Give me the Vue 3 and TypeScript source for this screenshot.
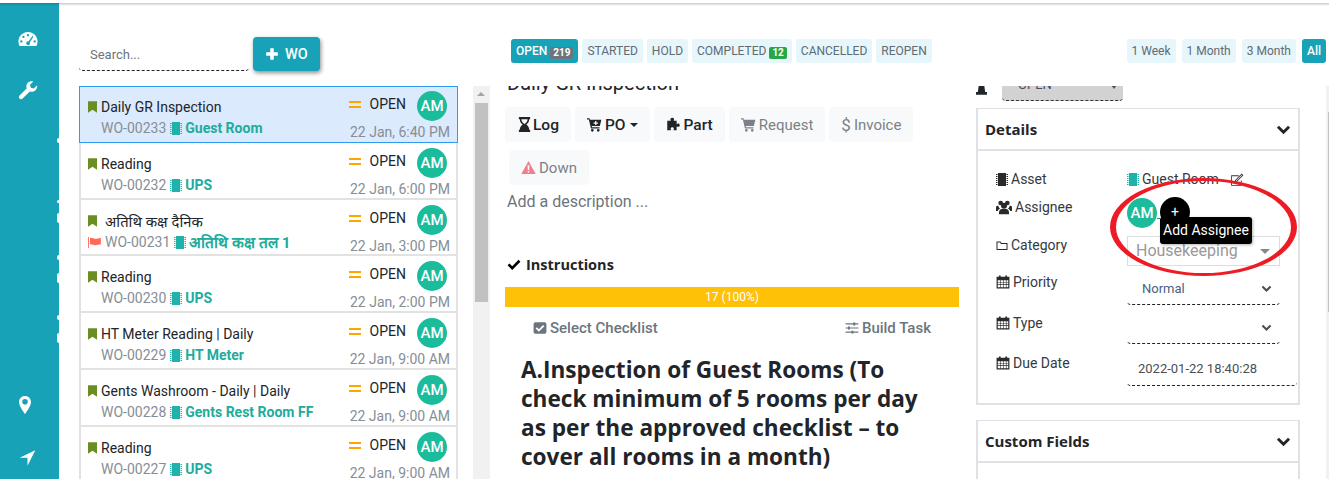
<template>
  <div class="page">
    <div class="topline"></div>
    <div class="body">
      <aside class="sidebar">
        <div class="side-top">
          <svg class="side-ic" viewBox="0 0 24 24"><path fill-rule="evenodd" :d="icons.gauge" /></svg>
          <svg class="side-ic" viewBox="0 0 24 24"><path :d="icons.wrench" /></svg>
        </div>
        <div class="side-bottom">
          <svg class="side-ic pin" viewBox="0 0 24 24"><path fill-rule="evenodd" :d="icons.marker" /></svg>
          <svg class="side-ic nav" viewBox="0 0 24 24"><path :d="icons.arrow" /></svg>
        </div>
        <i
          v-for="n in notches"
          :key="n.top"
          class="notch"
          :style="{ top: n.top + 'px', height: n.height + 'px' }"
        ></i>
      </aside>

      <main class="content">
        <div class="toolbar">
          <input class="search" placeholder="Search..." />
          <button class="add-btn">
            <svg class="ic" viewBox="0 0 24 24"><path :d="icons.plus" /></svg>
            WO
          </button>
          <div class="tabs">
            <span v-for="t in tabs" :key="t.label" class="tab" :class="{ active: t.active }">
              {{ t.label }}
              <b v-if="t.badge" class="badge" :class="t.badgeClass">{{ t.badge }}</b>
            </span>
          </div>
          <div class="ranges">
            <span v-for="r in ranges" :key="r" class="tab" :class="{ active: r === 'All' }">{{ r }}</span>
          </div>
        </div>

        <div class="panels">
          <section class="list">
            <article
              v-for="(wo, i) in orders"
              :key="wo.code"
              class="card"
              :class="{ selected: i === 0, short: wo.hindi }"
            >
              <div class="card-left">
                <div class="card-title">
                  <svg class="bookmark" viewBox="0 0 10 13"><path d="M0 0h10v13L5 9.500 0 13z" /></svg>
                  <span :class="{ hindi: wo.hindi }">{{ wo.title }}</span>
                </div>
                <div class="card-sub">
                  <svg v-if="wo.flag" class="flag" viewBox="0 0 14 12"><path d="M0 0h1v12H0zM2 1c3-1 4 1 6 1 2 0 3-1 6-1v7c-3 0-4 1-6 1-2 0-3-1-6-1z" /></svg>
                  <span class="code">{{ wo.code }}</span>
                  <svg class="chip" viewBox="0 0 12 13"><path :d="icons.chip" /></svg>
                  <strong class="asset" :class="{ 'asset-hi': wo.hindi }">{{ wo.asset }}</strong>
                </div>
              </div>
              <div class="card-right">
                <div class="status-row">
                  <i class="equals"></i>
                  <span class="status">OPEN</span>
                  <span class="avatar">AM</span>
                </div>
                <div class="date">{{ wo.date }}</div>
              </div>
            </article>
          </section>

          <div class="scrollbar">
            <i class="scroll-up"></i>
            <div class="thumb"></div>
          </div>

          <section class="detail">
            <h2 class="wo-title">Daily GR Inspection</h2>
            <div class="actions">
              <button class="act strong log">
                <svg class="ic" viewBox="0 0 24 24"><path fill-rule="evenodd" :d="icons.hourglass" /></svg>Log
              </button>
              <button class="act strong">
                <svg class="ic" viewBox="0 0 24 24"><path fill-rule="evenodd" :d="icons.cartPlus" /></svg>PO<i class="caret"></i>
              </button>
              <button class="act strong">
                <svg class="ic" viewBox="0 0 24 24"><path :d="icons.puzzle" /></svg>Part
              </button>
              <button class="act">
                <svg class="ic" viewBox="0 0 24 24"><path :d="icons.cart" /></svg>Request
              </button>
              <button class="act">
                <span class="dollar">$</span>Invoice
              </button>
              <button class="act down">
                <svg class="ic warn" viewBox="0 0 24 24"><path fill-rule="evenodd" :d="icons.warning" /></svg>Down
              </button>
            </div>
            <p class="desc">Add a description ...</p>
            <h3 class="instr">
              <svg class="ic" viewBox="0 0 24 24"><path :d="icons.check" /></svg>Instructions
            </h3>
            <div class="progress">17 (100%)</div>
            <div class="check-actions">
              <span class="check-link">
                <svg class="ic" viewBox="0 0 24 24"><path fill-rule="evenodd" :d="icons.checkbox" /></svg>Select Checklist
              </span>
              <span class="check-link">
                <svg class="ic" viewBox="0 0 24 24"><path :d="icons.sliders" /></svg>Build Task
              </span>
            </div>
            <h1 class="task-head">A.Inspection of Guest Rooms (To check minimum of 5 rooms per day as per the approved checklist – to cover all rooms in a month)</h1>
          </section>

          <section class="side-panel">
            <div class="status-line">
              <svg class="male" viewBox="0 7 12 9"><path d="M3 0h6v6l1 7h2v3H0v-3h2l1-7z" /></svg>
              <div class="status-select">
                <span>OPEN</span>
                <i class="mini-caret"></i>
              </div>
            </div>

            <div class="box">
              <div class="box-head">
                <span>Details</span>
                <svg class="chev" viewBox="0 0 24 24"><path :d="icons.chevron" /></svg>
              </div>
              <div class="box-body">
                <div class="row r-asset">
                  <label><svg class="lab-ic" viewBox="0 0 12 13"><path :d="icons.chip" /></svg>Asset</label>
                  <div class="val-asset">
                    <svg class="chip" viewBox="0 0 12 13"><path :d="icons.chip" /></svg>
                    <span>Guest Room</span>
                    <svg class="edit" viewBox="0 0 24 24"><path fill-rule="evenodd" :d="icons.edit" /></svg>
                  </div>
                </div>
                <div class="row r-assignee">
                  <label><svg class="lab-ic users" viewBox="0 0 24 24"><path :d="icons.users" /></svg>Assignee</label>
                  <span class="avatar">AM</span>
                  <i class="link-line"></i>
                </div>
                <div class="row r-category">
                  <label><svg class="lab-ic" viewBox="0 0 24 24"><path fill-rule="evenodd" :d="icons.folder" /></svg>Category</label>
                  <div class="house">Housekeeping<i class="mini-caret"></i></div>
                </div>
                <div class="row r-priority">
                  <label><svg class="lab-ic cal" viewBox="0 0 24 24"><path fill-rule="evenodd" :d="icons.calendar" /></svg>Priority</label>
                  <div class="dash-select">
                    <span>Normal</span>
                    <svg class="sel-chev" viewBox="0 0 24 24"><path :d="icons.chevron" /></svg>
                  </div>
                </div>
                <div class="row r-type">
                  <label><svg class="lab-ic cal" viewBox="0 0 24 24"><path fill-rule="evenodd" :d="icons.calendar" /></svg>Type</label>
                  <div class="dash-select">
                    <span></span>
                    <svg class="sel-chev" viewBox="0 0 24 24"><path :d="icons.chevron" /></svg>
                  </div>
                </div>
                <div class="row r-due">
                  <label><svg class="lab-ic cal" viewBox="0 0 24 24"><path fill-rule="evenodd" :d="icons.calendar" /></svg>Due Date</label>
                  <div class="dash-select due">2022-01-22 18:40:28</div>
                </div>
              </div>
            </div>

            <div class="box custom">
              <div class="box-head">
                <span>Custom Fields</span>
                <svg class="chev" viewBox="0 0 24 24"><path :d="icons.chevron" /></svg>
              </div>
            </div>
          </section>
          <div class="outer-scroll"><div class="outer-thumb"></div></div>
        </div>
      </main>
    </div>

    <!-- annotation drawn on top of the screenshot -->
    <div class="add-circle">+</div>
    <div class="add-tip">Add Assignee</div>
    <svg class="annotation" viewBox="0 0 190 102">
      <path
        fill="#ed1c24"
        fill-rule="evenodd"
        d="M1 51a93.500 49 0 1 0 187 0a93.500 49 0 1 0-187 0zM7 51a87.500 46 0 1 0 175 0a87.500 46 0 1 0-175 0z"
      />
    </svg>
  </div>
</template>

<script setup lang="ts">
interface Order {
  title: string
  code: string
  asset: string
  date: string
  hindi?: boolean
  flag?: boolean
}

const icons = {
  gauge:
    'M12 3.500C5.600 3.500.5 8.700.5 15c0 2 .5 3.800 1.500 5.500h20c1-1.700 1.500-3.500 1.500-5.500C23.500 8.700 18.400 3.500 12 3.500zM12 6a1.400 1.400 0 110 2.800A1.400 1.400 0 0112 6zM6.500 8a1.400 1.400 0 110 2.800A1.400 1.400 0 016.500 8zM4 13.500a1.400 1.400 0 110 2.800 1.400 1.400 0 010-2.800zM20 13.500a1.400 1.400 0 110 2.800 1.400 1.400 0 010-2.800zM17.300 8.500l1.200.8-4.400 6.600c.5.900.4 2-.3 2.700-1 .9-2.400.9-3.300 0-.9-.9-.9-2.300 0-3.200.6-.6 1.400-.8 2.200-.6z',
  wrench:
    'M23 6.300l-4 3.900-3.600-1-1-3.500 4-3.900C16.300.9 13.600 1.400 11.800 3.200 10 5 9.500 7.700 10.500 10L1.800 18.600c-1 1-1 2.700 0 3.700s2.700 1 3.700 0l8.700-8.600c2.300 1 5 .5 6.800-1.300 1.800-1.800 2.300-4.400 2-6.100z',
  marker:
    'M12 0C7.300 0 4 3.600 4 8c0 5.800 8 16 8 16s8-10.200 8-16c0-4.400-3.300-8-8-8zm0 11.500a3.700 3.700 0 110-7.400 3.700 3.700 0 010 7.400z',
  arrow: 'M23 1L1 11.500h11V23z',
  plus: 'M9 2h6v7h7v6h-7v7H9v-7H2V9h7z',
  chip:
    'M2 0h8v13H2zM0 1h1.500v1H0zM0 3h1.500v1H0zM0 5h1.500v1H0zM0 7h1.500v1H0zM0 9h1.500v1H0zM0 11h1.500v1H0zM10.500 1H12v1h-1.500zM10.500 3H12v1h-1.500zM10.500 5H12v1h-1.500zM10.500 7H12v1h-1.500zM10.500 9H12v1h-1.500zM10.500 11H12v1h-1.500z',
  hourglass:
    'M3 0h18v3.500h-1.500c0 4-2 6.500-4.500 8.500 2.500 2 4.500 4.500 4.500 8.500H21V24H3v-3.500h1.500c0-4 2-6.500 4.500-8.500-2.500-2-4.500-4.500-4.500-8.500H3zm4 3.500c.2 3 1.500 5.500 5 7.500 3.500-2 4.800-4.500 5-7.500z',
  cart:
    'M0 2h4l.7 2.500H23l-2.500 10H7.500l.4 1.800H20v2H6.300L3 4H0zM8.500 19a2.200 2.200 0 110 4.400 2.200 2.200 0 010-4.400zM18 19a2.200 2.200 0 110 4.400 2.200 2.200 0 010-4.400z',
  cartPlus:
    'M0 2h4l.7 2.500H23l-2.500 10H7.500l.4 1.800H20v2H6.300L3 4H0zM13 6.500v2.300h-2.500v1.800H13v2.200h2v-2.200h2.500V8.800H15V6.500zM8.500 19a2.200 2.200 0 110 4.400 2.200 2.200 0 010-4.400zM18 19a2.200 2.200 0 110 4.400 2.200 2.200 0 010-4.400z',
  puzzle:
    'M10 1c2 0 3 1.200 3 2.500 0 1-.7 1.500-.7 2.500H17v5c1 0 1.500-.7 2.500-.7 1.500 0 2.500 1 2.500 2.700s-1 2.700-2.500 2.700c-1 0-1.500-.7-2.500-.7v6H12c0-1 .6-1.500.6-2.500 0-1.300-1-2.200-2.600-2.200s-2.600.9-2.600 2.200c0 1 .6 1.500.6 2.500H2V6h5.700c0-1-.7-1.500-.7-2.500C7 2.200 8 1 10 1z',
  warning: 'M12 1.500L23.500 22.500H.5zM10.500 8.500l.4 7.500h2.200l.4-7.500zM10.700 17.500v2.500h2.600v-2.500z',
  check: 'M9 20.500L1 12.500l3.200-3.200L9 14l10.800-10.800L23 6.400z',
  checkbox:
    'M4 2h16a3 3 0 013 3v14a3 3 0 01-3 3H4a3 3 0 01-3-3V5a3 3 0 013-3zm6 16.500l9.500-9.500-2.200-2.200-7.300 7.300-3.300-3.300L4.500 13z',
  sliders:
    'M1 4h13V2.500h3.500V4H23v2h-5.500v1.500H14V6H1zM1 11h4V9.500h3.500V11H23v2H8.500v1.500H5V13H1zM1 18h10v-1.500h3.500V18H23v2h-8.500v1.500H11V20H1z',
  chevron: 'M12 19.500L1.500 9l3.200-3.200L12 13.100l7.300-7.300L22.500 9z',
  edit:
    'M2 4h13v1.500H3.500v15h15V13H20v9H2zM20 1l3 3-11.500 11.500-4 1 1-4zM20 3.200L10 13.200l-.4 1.200 1.200-.4 10-10z',
  users:
    'M7 2.500a3.500 3.500 0 110 7 3.500 3.500 0 010-7zM17 2.500a3.500 3.500 0 110 7 3.500 3.500 0 010-7zM12 5.500a4.500 4.500 0 110 9 4.500 4.500 0 010-9zM0 12c0-1.500 1.500-2 3.500-2 .4 2 1.200 3.500 2.500 4.500-2 .7-3 2-3.300 3.500H0zM24 12c0-1.500-1.500-2-3.500-2-.4 2-1.200 3.500-2.500 4.500 2 .7 3 2 3.300 3.500H24zM4.500 20c0-3 2-5 4-5h7c2 0 4 2 4 5v3h-15z',
  folder: 'M1 4h8l2 3h12v14H1zM3 6v13h18V9H10L8 6z',
  calendar:
    'M1 3h4V1h3v2h8V1h3v2h4v20H1zM3 9v3h4V9zM8 9v3h4V9zM13 9v3h4V9zM18 9v3h3V9zM3 13v3h4v-3zM8 13v3h4v-3zM13 13v3h4v-3zM18 13v3h3v-3zM3 17v4h4v-4zM8 17v4h4v-4zM13 17v4h4v-4zM18 17v4h3v-4z',
}

// small white nicks along the sidebar's right edge, offsets are from its top
const notches = [
  { top: 135, height: 5 },
  { top: 197, height: 3 },
  { top: 210, height: 10 },
  { top: 252, height: 5 },
  { top: 270, height: 10 },
  { top: 312, height: 5 },
  { top: 330, height: 10 },
]

const tabs = [
  { label: 'OPEN', badge: '219', badgeClass: 'grey', active: true },
  { label: 'STARTED' },
  { label: 'HOLD' },
  { label: 'COMPLETED', badge: '12', badgeClass: 'green' },
  { label: 'CANCELLED' },
  { label: 'REOPEN' },
]

const ranges = ['1 Week', '1 Month', '3 Month', 'All']

const orders: Order[] = [
  { title: 'Daily GR Inspection', code: 'WO-00233', asset: 'Guest Room', date: '22 Jan, 6:40 PM' },
  { title: 'Reading', code: 'WO-00232', asset: 'UPS', date: '22 Jan, 6:00 PM' },
  { title: 'अतिथि कक्ष दैनिक', code: 'WO-00231', asset: 'अतिथि कक्ष तल 1', date: '22 Jan, 3:00 PM', hindi: true, flag: true },
  { title: 'Reading', code: 'WO-00230', asset: 'UPS', date: '22 Jan, 2:00 PM' },
  { title: 'HT Meter Reading | Daily', code: 'WO-00229', asset: 'HT Meter', date: '22 Jan, 9:00 AM' },
  { title: 'Gents Washroom - Daily | Daily', code: 'WO-00228', asset: 'Gents Rest Room FF', date: '22 Jan, 9:00 AM' },
  { title: 'Reading', code: 'WO-00227', asset: 'UPS', date: '22 Jan, 9:00 AM' },
]
</script>

<style>
html,
body {
  margin: 0;
  background: #fff;
}
</style>

<style scoped>
.page {
  position: relative;
  width: 1329px;
  height: 479px;
  overflow: hidden;
  background: #fff;
  color: #212529;
  font-family: Roboto, "Liberation Sans", sans-serif;
  font-size: 14px;
}

.topline {
  height: 3px;
}

.body {
  display: flex;
  height: 476px;
}

/* sidebar */
.sidebar {
  position: relative;
  width: 59px;
  flex: none;
  background: linear-gradient(#0f8a9e, #17a2b8 3px);
  display: flex;
  flex-direction: column;
  justify-content: space-between;
  align-items: center;
  padding: 26px 0 11px;
  box-sizing: border-box;
}
.side-top,
.side-bottom {
  display: flex;
  flex-direction: column;
  align-items: center;
  padding-right: 4px;
}
.side-top {
  gap: 31px;
}
.side-bottom {
  gap: 33px;
}
.side-ic {
  width: 20px;
  height: 20px;
  fill: #fff;
  display: block;
}
.side-ic.pin {
  width: 18px;
  margin-right: 6px;
}
.side-ic.nav {
  width: 17px;
  margin-right: 1px;
}
.notch {
  position: absolute;
  right: 0;
  width: 2px;
  background: #fff;
  border-radius: 2px 0 0 2px;
}

/* toolbar */
.content {
  flex: 1;
  min-width: 0;
  background: linear-gradient(#c9c9c9, #fff) no-repeat top / 100% 3px;
}
.toolbar {
  height: 83px;
  display: flex;
  align-items: flex-start;
  padding-left: 20px;
  box-sizing: border-box;
}
.search {
  width: 170px;
  height: 36px;
  margin-top: 32px;
  box-sizing: border-box;
  border: 0;
  border-bottom: 1px dashed #222;
  border-radius: 0 0 4px 4px;
  padding: 3px 11px 0;
  font: 13px Roboto, sans-serif;
  outline: none;
  background: transparent;
}
.search::placeholder {
  color: #6c757d;
}
.add-btn {
  width: 67px;
  height: 34px;
  margin: 34px 0 0 4px;
  border: 0;
  border-radius: 4px;
  background: #17a2b8;
  color: #fff;
  font: 500 14.5px Roboto, sans-serif;
  box-shadow: 1px 2px 4px rgba(0, 0, 0, 0.45);
  display: flex;
  align-items: center;
  justify-content: center;
  gap: 6px;
  padding: 0;
}
.add-btn .ic {
  width: 14px;
  height: 14px;
  fill: #fff;
}
.tabs {
  display: flex;
  gap: 4px;
  margin: 36px 0 0 191px;
}
.ranges {
  display: flex;
  gap: 6px;
  margin: 36px 3px 0 auto;
}
.tab {
  height: 24px;
  line-height: 24px;
  padding: 0 5px;
  border-radius: 3px;
  background: #e6f6fa;
  color: #5f6b75;
  font-size: 12px;
  white-space: nowrap;
}
.tab.active {
  background: #17a2b8;
  color: #fff;
  font-weight: 500;
}
.badge {
  display: inline-block;
  padding: 0 3px;
  height: 12px;
  line-height: 12px;
  border-radius: 2px;
  font-size: 10px;
  font-weight: 700;
  color: #fff;
  vertical-align: -1px;
}
.badge.grey {
  background: #6c757d;
}
.badge.green {
  background: #28a745;
}

/* panels */
.panels {
  display: flex;
  height: 393px;
  overflow: hidden;
  padding-left: 20px;
}

/* work order list */
.list {
  width: 379px;
  flex: none;
}
.card {
  height: 57px;
  box-sizing: border-box;
  border: 2px solid #e2e2e2;
  border-top-width: 0;
  display: flex;
  justify-content: space-between;
  padding: 5px 6px 0 7px;
  color: #212529;
}
.card.short {
  height: 56px;
}
.card.selected {
  border: 1px solid #2f9bf0;
  background: #dbeafd;
  padding: 4px 7px 0 8px;
}
.card-left {
  min-width: 0;
}
.card-title {
  display: flex;
  align-items: center;
  height: 20px;
  margin-top: 6px;
  white-space: nowrap;
}
.bookmark {
  width: 9px;
  height: 12px;
  fill: #6b8e23;
  margin-right: 4px;
  flex: none;
}
.hindi {
  margin-left: 4px;
  font-size: 14.8px;
  font-family: "Noto Sans", "DejaVu Sans", sans-serif;
}
.card-sub {
  display: flex;
  align-items: center;
  height: 20px;
  margin-top: 1px;
  padding-left: 13px;
  white-space: nowrap;
}
.flag {
  width: 13px;
  height: 11px;
  fill: #ff6b5b;
  margin: 0 4px 0 -13px;
}
.code {
  color: #868e96;
}
.chip {
  width: 12px;
  height: 13px;
  fill: #20b2aa;
  margin: 0 3px 0 4px;
  flex: none;
}
.asset {
  color: #20ac9c;
  font-weight: 700;
}
.asset-hi {
  font-size: 15.4px;
}
.card-right {
  display: flex;
  flex-direction: column;
  align-items: flex-end;
  flex: none;
}
.status-row {
  display: flex;
  align-items: flex-start;
  height: 30px;
}
.equals {
  width: 12px;
  height: 7px;
  box-sizing: border-box;
  border-top: 2px solid #ffa500;
  border-bottom: 2px solid #ffa500;
  margin: 10px 9px 0 0;
}
.status {
  line-height: 18px;
  margin-right: 11px;
  margin-top: 4px;
}
.avatar {
  width: 30px;
  height: 30px;
  line-height: 30px;
  border-radius: 50%;
  text-align: center;
  background: #1abc9c;
  color: #fff;
  font-size: 15px;
  font-weight: 500;
  margin-right: 3px;
  display: block;
  flex: none;
}
.date {
  color: #868e96;
  line-height: 20px;
  margin-top: 1px;
  font-size: 14px;
}

/* scrollbar */
.scrollbar {
  width: 17px;
  flex: none;
  margin-left: 15px;
  background: #f1f1f1;
  position: relative;
}
.scroll-up {
  position: absolute;
  left: 4px;
  top: 6px;
  border-left: 4px solid transparent;
  border-right: 4px solid transparent;
  border-bottom: 4px solid #a3a3a3;
}
.thumb {
  position: absolute;
  left: 2px;
  right: 2px;
  top: 17px;
  height: 199px;
  background: #c1c1c1;
}

/* center */
.detail {
  width: 454px;
  flex: none;
  margin-left: 15px;
}
.wo-title {
  margin: -15px 0 0 2px;
  height: 29px;
  font-size: 20px;
  line-height: 24px;
  font-weight: 400;
}
.actions {
  display: flex;
  flex-wrap: wrap;
  gap: 8px 4px;
  width: 440px;
  margin-top: 7px;
}
.act {
  height: 35px;
  padding: 0 12px;
  border: 0;
  border-radius: 4px;
  background: #f8f9fa;
  color: #7b8188;
  font: 15px Roboto, sans-serif;
  display: flex;
  align-items: center;
}
.act .ic {
  width: 15px;
  height: 15px;
  margin-right: 3px;
  fill: #7b8188;
}
.act.strong {
  color: #212529;
  font-weight: 500;
  font-size: 15.5px;
}
.act.strong .ic {
  fill: #212529;
}
.act.log .ic {
  margin-right: 1px;
}
.act.down {
  margin-left: 4px;
}
.act .ic.warn {
  fill: #ef7f8c;
}
.dollar {
  margin-right: 3px;
  font-size: 17px;
}
.caret {
  border-left: 4px solid transparent;
  border-right: 4px solid transparent;
  border-top: 4px solid #212529;
  margin-left: 4px;
}
.desc {
  margin: 7px 0 0 2px;
  font-size: 16px;
  line-height: 20px;
  color: #6c757d;
}
.instr {
  display: flex;
  align-items: center;
  margin: 43px 0 0 2px;
  font-size: 14.5px;
  line-height: 20px;
  font-weight: 700;
  font-family: "Open Sans", sans-serif;
}
.instr .ic {
  width: 14px;
  height: 14px;
  margin-right: 5px;
}
.progress {
  height: 20px;
  line-height: 20px;
  margin-top: 12px;
  background: #ffc107;
  color: #fff;
  text-align: center;
  font-size: 12px;
}
.check-actions {
  display: flex;
  justify-content: space-between;
  padding: 11px 28px 0;
}
.check-link {
  display: flex;
  align-items: center;
  color: #6c757d;
  font-weight: 500;
  font-size: 15px;
  line-height: 20px;
}
.check-link .ic {
  width: 14px;
  height: 14px;
  margin-right: 3px;
  fill: #6c757d;
}
.task-head {
  margin: 17px 18px 0 16px;
  font-family: "Open Sans", sans-serif;
  font-size: 22.6px;
  line-height: 29px;
  font-weight: 700;
}

/* right column */
.side-panel {
  width: 324px;
  flex: none;
  margin-left: 17px;
}
.status-line {
  display: flex;
  height: 14px;
  margin-bottom: 8px;
  align-items: flex-start;
}
.male {
  width: 11px;
  height: 9px;
  fill: #212529;
  margin-right: 15px;
  flex: none;
}
.status-select {
  position: relative;
  width: 121px;
  height: 15px;
  box-sizing: border-box;
  background: #d2d2d2;
  border-bottom: 1px dashed #333;
  border-radius: 0 0 4px 4px;
  overflow: hidden;
  font-size: 13px;
  color: #495057;
}
.status-select span {
  position: absolute;
  left: 16px;
  top: -9px;
}
.status-select .mini-caret {
  position: absolute;
  right: 6px;
  top: -1px;
  border-width: 4px 3px 0;
  border-top-color: #555;
}
.mini-caret {
  position: absolute;
  border: solid transparent;
  border-width: 5px 5px 0;
  border-top-color: #888;
}
.box {
  border: 2px solid #dee2e6;
  border-width: 1px 2px 2px;
  box-sizing: border-box;
  height: 297px;
}
.box.custom {
  margin-top: 15px;
  height: 80px;
}
.box-head {
  height: 40px;
  border-bottom: 2px solid #dee2e6;
  display: flex;
  align-items: center;
  justify-content: space-between;
  padding: 0 7px;
  font-family: "Open Sans", sans-serif;
  font-weight: 700;
  font-size: 15px;
}
.chev {
  width: 15px;
  height: 15px;
  fill: #212529;
}
.box-body {
  padding: 15px 0 0 18px;
}
.row {
  display: flex;
  align-items: flex-start;
}
.row label {
  width: 131px;
  flex: none;
  display: flex;
  align-items: center;
  color: #343a40;
  line-height: 18px;
}
.lab-ic {
  width: 12px;
  height: 13px;
  fill: #2a2a2a;
  margin-right: 3px;
  flex: none;
}
.lab-ic.users {
  width: 16px;
  height: 16px;
}
.lab-ic.cal {
  width: 14px;
  height: 14px;
}
.r-asset {
  height: 28px;
  padding-top: 4px;
  box-sizing: border-box;
}
.val-asset {
  display: flex;
  align-items: center;
  color: #343a40;
  line-height: 18px;
}
.val-asset .chip {
  margin: 0 3px 0 0;
}
.edit {
  width: 14px;
  height: 14px;
  margin: 1px 0 0 11px;
  fill: #333;
}
.r-assignee {
  height: 42px;
  padding-top: 4px;
  box-sizing: border-box;
}
.r-assignee .avatar {
  margin-right: 0;
}
.link-line {
  width: 3px;
  height: 1px;
  background: #2a6fb0;
  margin-top: 20px;
}
.r-category {
  height: 35px;
}
.house {
  position: relative;
  width: 153px;
  height: 30px;
  box-sizing: border-box;
  border: 1px solid #ddd;
  line-height: 28px;
  padding-left: 8px;
  font-size: 16px;
  color: #999;
}
.house .mini-caret {
  right: 9px;
  top: 12px;
}
.r-priority {
  height: 39px;
}
.r-priority label {
  padding-top: 2px;
}
.r-type {
  height: 42px;
}
.r-type label {
  padding-top: 4px;
}
.dash-select {
  width: 153px;
  height: 34px;
  box-sizing: border-box;
  border-bottom: 1px dashed #222;
  border-radius: 0 0 4px 4px;
  display: flex;
  align-items: center;
  justify-content: space-between;
  padding: 2px 8px 0 15px;
  font-size: 13px;
  color: #495f7e;
}
.sel-chev {
  width: 11px;
  height: 11px;
  fill: #495057;
}
.r-due label {
  padding-top: 2px;
}
.dash-select.due {
  width: 170px;
  padding: 0 0 0 11px;
  color: #495057;
}
.outer-scroll {
  position: relative;
  width: 3px;
  margin-left: 26px;
  background: #f1f1f1;
  flex: none;
}
.outer-thumb {
  position: absolute;
  right: 0;
  top: 26px;
  width: 1px;
  height: 200px;
  background: #c1c1c1;
}

/* overlays */
.add-circle {
  position: absolute;
  left: 1160px;
  top: 197px;
  width: 30px;
  height: 30px;
  line-height: 30px;
  border-radius: 50%;
  background: #000;
  color: #fff;
  text-align: center;
  font-size: 14px;
}
.add-tip {
  position: absolute;
  left: 1160px;
  top: 217px;
  width: 92px;
  height: 27px;
  line-height: 27px;
  border-radius: 3px;
  background: #000;
  color: #fff;
  text-align: center;
  font-size: 14px;
  box-shadow: 1px 1px 3px rgba(0, 0, 0, 0.3);
}
.annotation {
  position: absolute;
  left: 1109px;
  top: 176px;
  width: 190px;
  height: 102px;
  pointer-events: none;
}
</style>
